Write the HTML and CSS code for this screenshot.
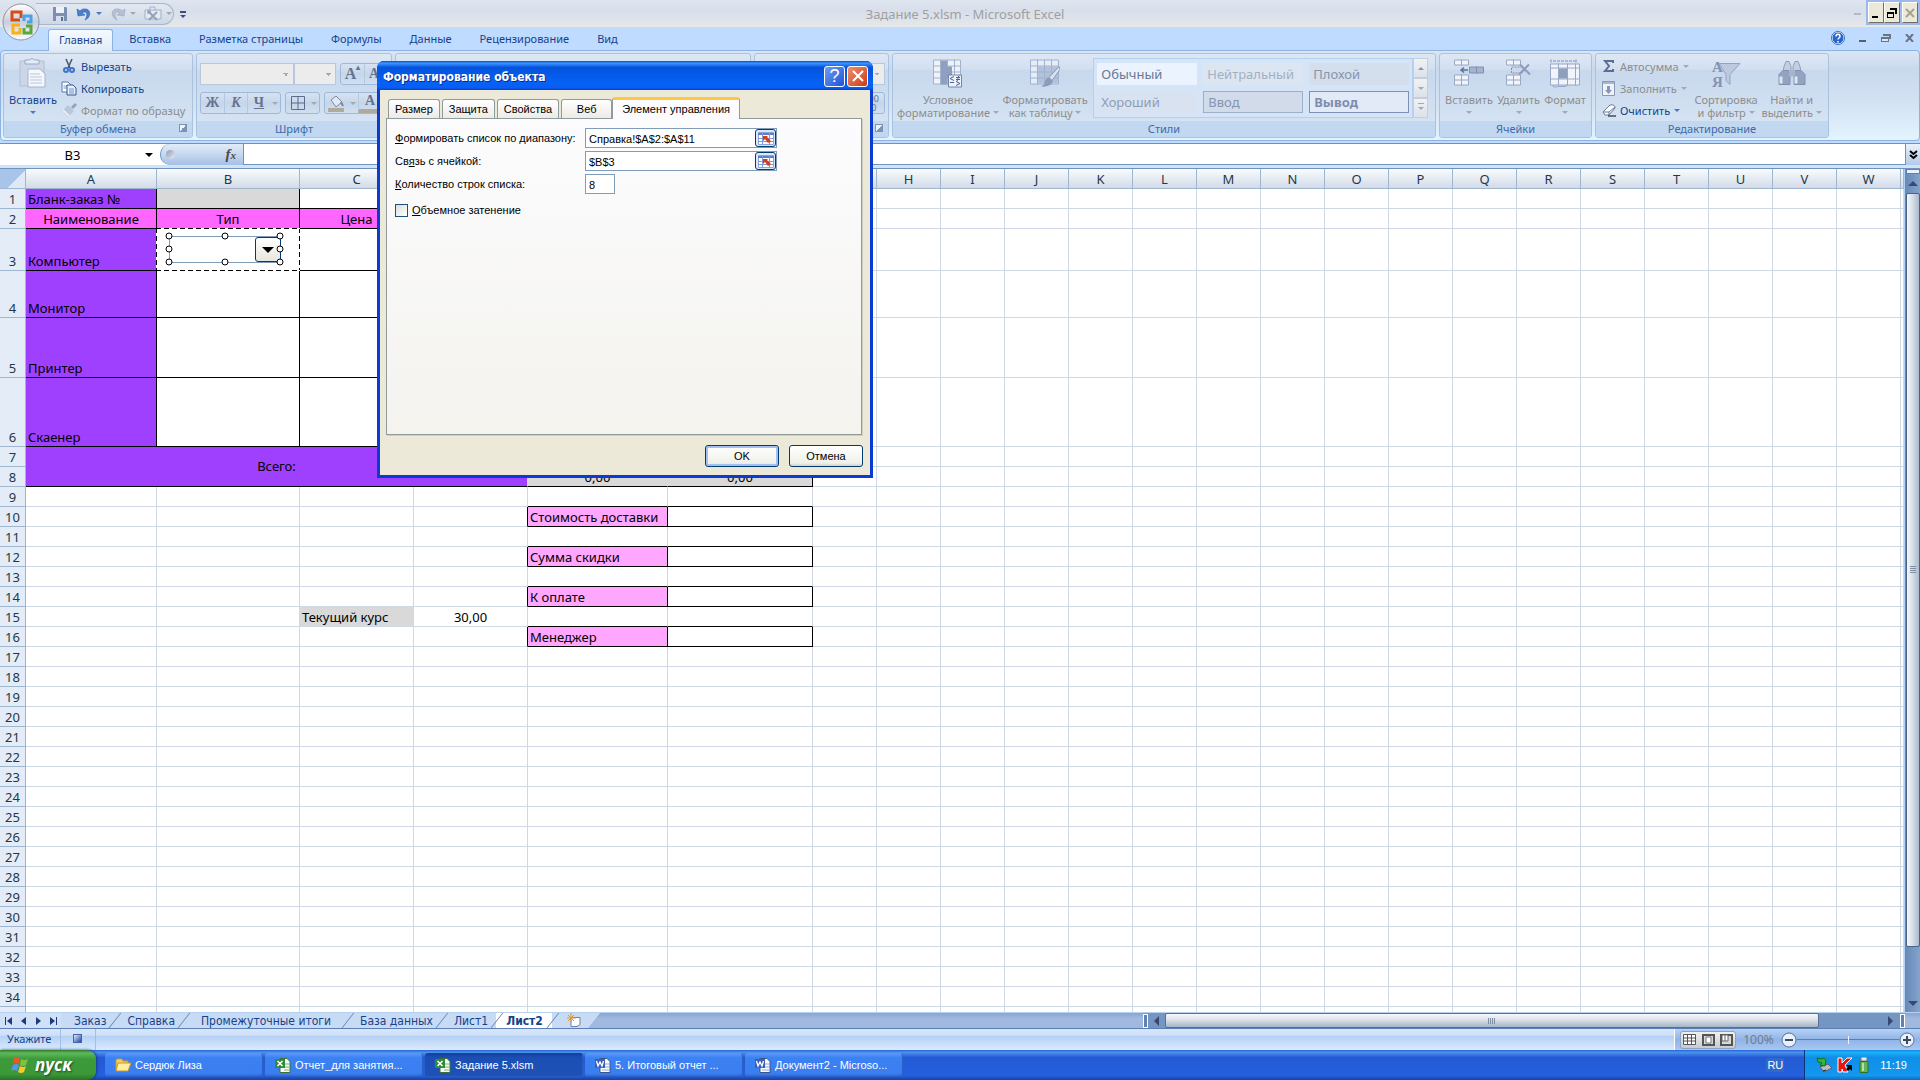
FILE: index.html
```
<!DOCTYPE html>
<html lang="ru">
<head>
    <meta charset="UTF-8">
    <meta name="viewport" content="width=device-width, initial-scale=1.0">
    <title>Задание 5.xlsm - Microsoft Excel</title>
    <link rel="stylesheet" href="styles.css">
</head>
<body>
    <header class="titlebar">
        <div class="qat">
            <button aria-label="Сохранить"><svg width="16" height="16" viewBox="0 0 16 16"><path d="M1 1h13l1 1v13H1z" fill="#7d8fb5"/><path d="M4 1h8v6H4z" fill="#eef2f8"/><path d="M4 10h8v5H4z" fill="#d5dcea"/><path d="M9 11h2v4H9z" fill="#5c6f98"/></svg></button>
            <button aria-label="Отменить"><svg width="16" height="16" viewBox="0 0 16 16"><path d="M1 3l1 7 7-1-3-2c4-3 7 1 3 7 7-3 6-12-1-11-2 0-3 1-4 2z" fill="#4a7fd0" stroke="#2f5fae" stroke-width=".6"/></svg><i class="arrow blue"></i></button>
            <button aria-label="Вернуть"><svg width="16" height="16" viewBox="0 0 16 16"><path d="M15 3l-1 7-7-1 3-2c-4-3-7 1-3 7-7-3-6-12 1-11 2 0 3 1 4 2z" fill="#b4c0d4" stroke="#98a6be" stroke-width=".6"/></svg><i class="arrow"></i></button>
            <button aria-label="Настройка"><svg width="18" height="16" viewBox="0 0 18 16"><path d="M1 4h16v9H1zM6 4V1h5v3" fill="#e4e9f2" stroke="#a3afc4"/><path d="M5 14l8-8M5 6l8 8" stroke="#94a2bb" stroke-width="2"/><circle cx="5" cy="6" r="2" fill="#94a2bb"/></svg><i class="arrow"></i></button>
        </div>
        <button class="qat-more" aria-label="Настройка панели"><i class="arrow dark"></i></button>
        <h1>Задание 5.xlsm - Microsoft Excel</h1>
        <span class="ghost-min"></span>
        <div class="win-buttons">
            <button aria-label="Свернуть"><svg width="12" height="12"><path d="M2 9h6v2H2z"/></svg></button>
            <button aria-label="Восстановить"><svg width="12" height="12"><path d="M4 1h7v6H9V3H4zM1 5h7v6H1zM2 7v3h5V7z" fill-rule="evenodd"/></svg></button>
            <button aria-label="Закрыть" class="off"><svg width="12" height="12"><path d="M2 2l8 8M10 2l-8 8" stroke="#a5a294" stroke-width="2"/></svg></button>
        </div>
    </header>

    <button class="office" aria-label="Кнопка Office">
        <svg width="38" height="38" viewBox="0 0 38 38">
            <defs><linearGradient id="ob" x1="0" y1="0" x2="0" y2="1"><stop offset="0" stop-color="#fff"/><stop offset=".5" stop-color="#c8cede"/><stop offset="1" stop-color="#fdfdfe"/></linearGradient></defs>
            <circle cx="19" cy="19" r="18" fill="url(#ob)" stroke="#8a95a8"/>
            <g fill="none" stroke-width="3">
                <path d="M18 17h-8V9h9v6" stroke="#dc4a13"/>
                <path d="M22 18v-5h7v6h-4" stroke="#4aa3e6"/>
                <path d="M18 22h-7v8h7v-5" stroke="#f5b21a"/>
                <path d="M22 25v5h7v-7h-5" stroke="#5aa83a"/>
            </g>
        </svg>
    </button>

    <nav class="tabs">
        <button class="active">Главная</button>
        <button>Вставка</button>
        <button>Разметка страницы</button>
        <button>Формулы</button>
        <button>Данные</button>
        <button>Рецензирование</button>
        <button>Вид</button>
        <div class="mdi">
            <svg width="14" height="14"><circle cx="7" cy="7" r="6" fill="#2765cf" stroke="#fff"/><circle cx="7" cy="7" r="6.5" fill="none" stroke="#3d6fb8"/><path d="M5 5.500c0-3 4-3 4 0 0 1.500-2 1.500-2 3M7 10v1.500" stroke="#fff" stroke-width="1.500" fill="none"/></svg>
            <svg width="8" height="8"><path d="M0 6h7v2H0z" fill="#555f70"/></svg>
            <svg width="10" height="8"><path d="M2 0h8v5H8V2H2zM0 3h8v5H0z" fill="#6b7485"/><path d="M1 5h6v2H1z" fill="#d8e6fa"/></svg>
            <svg width="9" height="8"><path d="M1 0l7 8M8 0L1 8" stroke="#6b7485" stroke-width="2"/></svg>
        </div>
    </nav>

    <section class="ribbon">
        <div class="group clip">
            <div class="body">
                <button class="big live"><svg width="28" height="31" viewBox="0 0 28 31"><path d="M1 3h24v25H1z" fill="#ccd6e7" stroke="#b2bfd6"/><path d="M6 2h4q3-3 6 0h4v4H6z" fill="#e6ebf4" stroke="#9caac4"/><path d="M9 11h12l5 5v13H9z" fill="#f4f7fc" stroke="#a5b4cf"/><path d="M11 16h10M11 19h12M11 22h12M11 25h12" stroke="#b9c6dd"/></svg><span>Вставить</span><i class="arrow blue"></i></button>
                <div class="stack">
                    <button class="small live"><svg width="16" height="16" viewBox="0 0 16 16"><path d="M5 1l4 9M11 1L7 10" stroke="#47566f" stroke-width="1.500"/><circle cx="5" cy="12" r="2" fill="none" stroke="#3f74c8" stroke-width="2"/><circle cx="11" cy="12" r="2" fill="none" stroke="#3f74c8" stroke-width="2"/></svg>Вырезать</button>
                    <button class="small live"><svg width="16" height="16" viewBox="0 0 16 16"><path d="M1 2h6l3 3v7H1z" fill="#fff" stroke="#5778ad"/><path d="M2.500 6h5M2.500 8h5" stroke="#7798cc"/><path d="M6 5h6l3 3v7H6z" fill="#e8f0fc" stroke="#35578f"/><path d="M8 9h5M8 11h5M8 13h5" stroke="#6f94cf"/></svg>Копировать</button>
                    <button class="small"><svg width="16" height="16" viewBox="0 0 16 16"><path d="M10 5l4-4 2 2-4 4z" fill="#93a2ba"/><path d="M7 3l6 6-4 4-2 2-6-6z" fill="#bac6d9"/><path d="M2 8l6 6" stroke="#e8edf5" stroke-width="2"/></svg>Формат по образцу</button>
                </div>
            </div>
            <footer>Буфер обмена<i class="launcher"></i></footer>
        </div>
        <div class="group font">
            <div class="body lines">
                <div class="line">
                    <select class="fname" aria-label="Шрифт" disabled></select>
                    <select class="fsize" aria-label="Размер шрифта" disabled></select>
                    <div class="btns"><button class="serif grow">A<sup>▴</sup></button><button class="serif">A<sup>▾</sup></button></div>
                </div>
                <div class="line">
                    <div class="btns"><button class="serif">Ж</button><button class="serif it">К</button><button class="serif un">Ч</button><button class="drop" aria-label="Подчеркивание"><i class="arrow"></i></button></div>
                    <div class="btns"><button aria-label="Границы"><svg width="14" height="14"><path d="M.5.5h13v13H.5zM7 0v14M0 7h14" fill="none" stroke="#5b6b8d"/></svg></button><button class="drop" aria-label="Вид границ"><i class="arrow"></i></button></div>
                    <div class="btns"><button aria-label="Заливка"><svg width="17" height="17"><path d="M3 5l5-4 6 6-6 5z" fill="#e3e9f3" stroke="#7987a3"/><path d="M13 7l2 4" stroke="#7987a3" stroke-width="2"/><path d="M0 13h16v4H0z" fill="#b0aa9c"/></svg></button><button class="drop" aria-label="Цвет заливки"><i class="arrow"></i></button><button class="serif color">A</button></div>
                </div>
            </div>
            <footer>Шрифт</footer>
        </div>
        <div class="group align"><div class="body"></div><footer></footer></div>
        <div class="group number">
            <div class="body lines">
                <div class="line"><select aria-label="Числовой формат" disabled></select></div>
                <div class="line end"><div class="btns"><button class="dec">,00<br>,0</button></div></div>
            </div>
            <footer><i class="launcher"></i></footer>
        </div>
        <div class="group styles">
            <div class="body">
                <button class="big wide"><svg width="30" height="30" viewBox="0 0 30 30"><path d="M.5 1.500h27v24H.5z" fill="#eef3fb" stroke="#a2b1cc"/><path d="M0 7.500h28M0 13.500h28M0 19.500h28M7.500 1v25M14.500 1v25M21.500 1v25" stroke="#a2b1cc"/><path d="M8 2h6v24H8zM14 8h5v12h-5z" fill="#8f9fc0"/><path d="M15.500 16.500h13v12h-13z" fill="#eef3fb" stroke="#7284a8"/><path d="M21 18l-4 2 4 2M17 24h4M23 19h4M23 21h4M26 17l-2 6M23 23l4 2-4 2" fill="none" stroke="#50628a"/></svg><span>Условное<br>форматирование <i class="arrow"></i></span></button>
                <button class="big wide"><svg width="30" height="30" viewBox="0 0 30 30"><path d="M.5 1.500h28v24H.5z" fill="#e6edf8" stroke="#a2b1cc"/><path d="M8 8h20v17H8z" fill="#b3c2dc"/><path d="M0 7.500h28M0 13.500h28M0 19.500h28M7.500 1v25M14.500 1v25M21.500 1v25" stroke="#a2b1cc"/><path d="M29 8L19 19l3 3 8-11z" fill="#dbe3f0" stroke="#8797b5"/><path d="M19 19l4 4q-3 6-12 5 4-2 4-5 1-4 4-4z" fill="#8b9cbb"/></svg><span>Форматировать<br>как таблицу <i class="arrow"></i></span></button>
                <div class="gallery">
                    <button class="s1">Обычный</button><button class="s2">Нейтральный</button><button class="s3">Плохой</button>
                    <button class="s4">Хороший</button><button class="s5">Ввод</button><button class="s6">Вывод</button>
                </div>
                <div class="gscroll"><button aria-label="Вверх"><i class="arrow up"></i></button><button aria-label="Вниз"><i class="arrow"></i></button><button aria-label="Все стили"><i class="arrow bar"></i></button></div>
            </div>
            <footer>Стили</footer>
        </div>
        <div class="group cells">
            <div class="body">
                <button class="big"><svg width="30" height="30" viewBox="0 0 30 30"><path d="M.5 1.500h14v5H.5zM.5 16.500h14v10H.5zM7.500 1v6M7.500 16v11M0 21.500h15" fill="#f1f5fb" stroke="#98a8c5"/><path d="M15.500 8.500h14v6h-14zM22.500 8v7" fill="#a4b3ce" stroke="#7e8fb0"/><path d="M14 11.500H7M10 9l-3 2.500 3 2.500" fill="none" stroke="#5f7299" stroke-width="1.500"/></svg><span>Вставить</span><i class="arrow"></i></button>
                <button class="big"><svg width="26" height="30" viewBox="0 0 26 30"><path d="M.5 1.500h14v5H.5zM.5 16.500h14v10H.5zM7.500 1v6M7.500 16v11M0 21.500h15" fill="#f1f5fb" stroke="#98a8c5"/><path d="M5.500 8.500h10l4 3-4 3h-10z" fill="#cdd8ea" stroke="#7e8fb0" stroke-dasharray="2 1"/><path d="M14 6l10 10M23 6L13 16" stroke="#8c9cba" stroke-width="2"/></svg><span>Удалить</span><i class="arrow"></i></button>
                <button class="big"><svg width="30" height="30" viewBox="0 0 30 30"><path d="M1 1v3M26 1v3M3 2.500h22" stroke="#7f90b0" stroke-dasharray="3 1"/><path d="M.5 5.500h29v21H.5z" fill="#f1f5fb" stroke="#98a8c5"/><path d="M0 9.500h30M0 20.500h30M8.500 5v22M17.500 5v22M25.500 5v22" stroke="#98a8c5"/><path d="M9 10h8v10H9z" fill="#8fa0bf"/><path d="M2 27q3 3 6 1h8l1-2" fill="none" stroke="#98a8c5"/></svg><span>Формат</span><i class="arrow"></i></button>
            </div>
            <footer>Ячейки</footer>
        </div>
        <div class="group edit">
            <div class="body">
                <div class="stack">
                    <button class="small"><svg width="14" height="16" viewBox="0 0 14 16"><path d="M11 5V3H3l4 5-4 5h8v-2" fill="none" stroke="#5c6d8f" stroke-width="2"/></svg>Автосумма <i class="arrow"></i></button>
                    <button class="small"><svg width="14" height="16" viewBox="0 0 14 16"><path d="M.5 1.500h12v14H.5z" fill="#eef2f9" stroke="#8998b5"/><path d="M1 2h11v2H1z" fill="#a9b6cf"/><path d="M5 6h3v4h2l-3.500 4L3 10h2z" fill="#8796b6"/></svg>Заполнить <i class="arrow"></i></button>
                    <button class="small live"><svg width="14" height="16" viewBox="0 0 14 16"><path d="M1 10l7-7q5-1 5 3l-6 7H3z" fill="#fff" stroke="#6a7a96"/><path d="M1 10l6 0 6-5M7 10v3" fill="none" stroke="#6a7a96"/><path d="M6 14h8" stroke="#000"/></svg>Очистить <i class="arrow blue"></i></button>
                </div>
                <button class="big sort"><svg width="30" height="30" viewBox="0 0 30 30"><text x="1" y="13" class="glyph">А</text><text x="1" y="28" class="glyph">Я</text><path d="M8 5h21L19 16v10l-4-4v-6z" fill="#bcc9de" stroke="#93a3c0"/></svg><span>Сортировка<br>и фильтр <i class="arrow"></i></span></button>
                <button class="big"><svg width="30" height="30" viewBox="0 0 30 30"><path d="M7 8l2-5h3l2 5v6H6zM16 8l2-5h3l2 5 1 6h-8z" fill="#c3cee1" stroke="#8e9ebc"/><path d="M2 16l4-4h6l1 5v9H2zM28 16l-4-4h-6l-1 5v9h11z" fill="#93a3c1" stroke="#8090b0"/><path d="M4 18v7M19 18v7" stroke="#dfe6f2" stroke-width="3"/><path d="M12 12h6v6h-6z" fill="#a5b3cd"/></svg><span>Найти и<br>выделить <i class="arrow"></i></span></button>
            </div>
            <footer>Редактирование</footer>
        </div>
    </section>

    <div class="formula-bar">
        <button class="name-box">B3</button><i class="arrow black"></i>
        <div class="fx"><i class="knob"></i><em>f<small>x</small></em></div>
        <input type="text" aria-label="Строка формул">
        <button class="expand" aria-label="Развернуть"><svg width="9" height="10"><path d="M1 1l3.500 3L8 1M1 5l3.500 3L8 5" fill="none" stroke="#000" stroke-width="2"/></svg></button>
    </div>

    <main class="sheet">
        <div class="grid-wrap"><table class="grid" id="grid"></table></div>
        <div class="vscroll"><i class="split"></i><i class="arrow up"></i><div class="thumb"></div><i class="arrow"></i></div>
    </main>

    <div class="sheet-bar">
        <div class="sheet-nav">
            <svg width="9" height="8"><path d="M1 0h1v8H1zM8 0v8L3 4z"/></svg>
            <svg width="9" height="8"><path d="M7 0v8L2 4z"/></svg>
            <svg width="9" height="8"><path d="M2 0v8l5-4z"/></svg>
            <svg width="9" height="8"><path d="M7 0h1v8H7zM1 0v8l5-4z"/></svg>
        </div>
        <div class="sheet-tabs">
            <button>Заказ</button><button>Справка</button><button class="roomy">Промежуточные итоги</button><button>База данных</button><button>Лист1</button><button class="active">Лист2</button>
            <button class="new" aria-label="Новый лист"><svg width="16" height="15"><path d="M5 4.500h9v7l-3 2H5z" fill="#fff" stroke="#6a7fae"/><path d="M5 0v9M1 5h9M2 2l6 6M8 2L2 8" stroke="#e59a2c"/></svg></button>
        </div>
        <div class="hscroll"><i class="split"></i><i class="tri left"></i><div class="track"><div class="thumb"></div></div><i class="tri"></i><i class="split"></i></div>
    </div>

    <div class="status">
        <span class="mode">Укажите</span>
        <span class="macro"><i></i></span>
        <div class="views">
            <div class="view-set">
                <button aria-label="Обычный"><svg width="14" height="12"><path d="M.5.500h12v10H.5zM4.500 0v11M8.500 0v11M0 4h13M0 7h13" fill="#fff" stroke="#555"/></svg></button>
                <button aria-label="Разметка"><svg width="13" height="12"><path d="M1 1h11v10H1z" fill="#d8d8d8" stroke="#555" stroke-width="2"/><path d="M4 3h5v6H4z" fill="#fff" stroke="#777"/></svg></button>
                <button aria-label="Страничный"><svg width="13" height="12"><path d="M1 1h11v10H1z" fill="#d8d8d8" stroke="#555" stroke-width="2"/><path d="M2 1h6v6H2zM5 0v7" fill="#fff" stroke="#666"/></svg></button>
            </div>
            <span class="pct">100%</span>
            <button class="zoom" aria-label="Уменьшить"><svg width="16" height="16"><circle cx="8" cy="8" r="7" fill="#e8f0fb" stroke="#54709a"/><path d="M4 7h8v2H4z" fill="#3d4a60"/></svg></button>
            <span class="slider"></span>
            <button class="zoom" aria-label="Увеличить"><svg width="16" height="16"><circle cx="8" cy="8" r="7" fill="#e8f0fb" stroke="#54709a"/><path d="M4 7h8v2H4zM7 4h2v8H7z" fill="#3d4a60"/></svg></button>
        </div>
    </div>

    <footer class="taskbar">
        <button class="start"><svg width="20" height="20" viewBox="0 0 20 20"><path d="M3 3q3-2 6 0L8 9Q5 7 2 9z" fill="#e8582a"/><path d="M10 4q3 2 7 0l-2 6q-3 2-6 0z" fill="#7fc241"/><path d="M2 10q3-2 6 0l-2 6q-3-2-6 0z" fill="#5b93ee"/><path d="M9 11q3 2 6 0l-2 6q-3 2-6 0z" fill="#fbc82c"/></svg>пуск</button>
        <button class="task"><svg width="16" height="16"><path d="M1 3l1-1h5l1 2h5v9H1z" fill="#f5cf56" stroke="#c9962a"/><path d="M3 6h13l-3 8H1z" fill="#fdeea0" stroke="#c9962a"/></svg><span>Сердюк Лиза</span></button>
        <button class="task"><svg width="16" height="16"><use href="#xl"/></svg><span>Отчет_для занятия...</span></button>
        <button class="task current"><svg width="16" height="16"><use href="#xl"/></svg><span>Задание 5.xlsm</span></button>
        <button class="task"><svg width="16" height="16"><use href="#wd"/></svg><span>5. Итоговый отчет ...</span></button>
        <button class="task"><svg width="16" height="16"><use href="#wd"/></svg><span>Документ2 - Microso...</span></button>
        <span class="lang">RU</span>
        <div class="tray">
            <svg width="16" height="16"><path d="M4 10l8-3 4 4-8 4z" fill="#b9bec6" stroke="#565c66"/><path d="M7 14l3-1" stroke="#222"/><path d="M1 1l4 1 3-1 2 2-1 6-5-1 2-2-4-1z" fill="#35b53c" stroke="#12701b"/></svg>
            <svg width="16" height="16"><path d="M1 1h4v5l5-5h5L8 8l3 7H6L5 12v3H1z" fill="#e8160c" stroke="#fff"/><path d="M9 8l2 2-2 2 2 2 2-2 2 2V8z" fill="#000"/></svg>
            <svg width="12" height="16"><path d="M3 0h6v4H3z" fill="#e9ecef" stroke="#777"/><path d="M2 4.500h8v11H2z" fill="#69b357" stroke="#2c7424"/><path d="M4 6h2v8H4z" fill="#b5e2a4"/></svg>
            <span>11:19</span>
        </div>
    </footer>

    <svg class="defs" width="0" height="0">
        <symbol id="xl" viewBox="0 0 16 16"><path d="M5 1.500h7l3 3v11H5z" fill="#f4fbf2" stroke="#3f6e3c"/><path d="M9 7h5M9 10h5M9 13h5" stroke="#7bb072"/><path d="M0 2h10v9H0z" fill="#2f8a3a"/><path d="M2.500 4l5 5M7.500 4l-5 5" stroke="#fff" stroke-width="1.500"/></symbol>
        <symbol id="wd" viewBox="0 0 16 16"><path d="M5 1.500h7l3 3v11H5z" fill="#f6f9ff" stroke="#3d5687"/><path d="M9 7h5M9 10h5M7 13h7" stroke="#8fa9d8"/><path d="M0 2h10v9H0z" fill="#3a5fb5"/><path d="M1.500 4l1.500 5 2-4 2 4 1.500-5" fill="none" stroke="#fff" stroke-width="1.300"/></symbol>
        <symbol id="ref" viewBox="0 0 16 13"><path d="M.5.500h15v12H.5z" fill="#fff" stroke="#8ba6d6"/><path d="M0 2h16" stroke="#5a80cc" stroke-width="2"/><path d="M0 6.500h16M0 9.500h16M4.500 1v12M11.500 1v12" stroke="#7f9bd3"/><path d="M5 4h5l-1 1 4 4-3 2-3-4-2 2z" fill="#d63a1c"/></symbol>
    </svg>

    <div class="dialog" role="dialog" aria-labelledby="dlg-title">
        <div class="dlg-head">
            <h2 id="dlg-title">Форматирование объекта</h2>
            <button class="help">?</button>
            <button class="close" aria-label="Закрыть"><svg width="12" height="12"><path d="M1 1l10 10M11 1L1 11" stroke="#fff" stroke-width="2"/></svg></button>
        </div>
        <div class="dlg-body">
            <div class="dlg-tabs">
                <button>Размер</button><button>Защита</button><button>Свойства</button><button>Веб</button><button class="active">Элемент управления</button>
            </div>
            <form class="panel">
                <label for="range"><u>Ф</u>ормировать список по диапазону:</label>
                <div class="ref"><input id="range" type="text" value="Справка!$A$2:$A$11"><button type="button" aria-label="Выбрать диапазон"><svg width="16" height="13"><use href="#ref"/></svg></button></div>
                <label for="link">Св<u>я</u>зь с ячейкой:</label>
                <div class="ref"><input id="link" type="text" value="$B$3"><button type="button" aria-label="Выбрать ячейку"><svg width="16" height="13"><use href="#ref"/></svg></button></div>
                <label for="rows"><u>К</u>оличество строк списка:</label>
                <div class="ref short"><input id="rows" type="text" value="8"></div>
                <label class="check"><input type="checkbox"><span><u>О</u>бъемное затенение</span></label>
            </form>
            <div class="dlg-foot">
                <button class="default">OK</button>
                <button>Отмена</button>
            </div>
        </div>
    </div>

    <script src="script.js"></script>
</body>
</html>
```
FILE: styles.css
```
* {
    box-sizing: border-box;
}
body {
    margin: 0;
    height: 100vh;
    display: flex;
    flex-direction: column;
    overflow: hidden;
    font: 11px/13px "Noto Sans", "Open Sans", sans-serif;
    color: #15428b;
    background: #bfdbff;
}
button, input, select {
    font: inherit;
    color: inherit;
    margin: 0;
    padding: 0;
    border: none;
    background: none;
    border-radius: 0;
}
svg {
    display: block;
    flex: none;
}
.arrow {
    display: inline-block;
    flex: none;
    border: 3px solid transparent;
    border-top: 3px solid #a3a9b3;
    border-bottom: none;
}
.arrow.up {
    border-top: none;
    border-bottom: 3px solid #8a93a3;
}
.arrow.blue {
    border-top-color: #4d79b8;
}
.arrow.black {
    border-width: 4px;
    border-top-color: #000;
    border-bottom: none;
}
.arrow.dark, .arrow.bar {
    position: relative;
    border-top-color: #3a4d80;
}
.arrow.bar {
    border-top-color: #a3a9b3;
}
.arrow.dark::before, .arrow.bar::before {
    content: "";
    position: absolute;
    left: -3px;
    top: -7px;
    width: 6px;
    height: 2px;
    background: #3a4d80;
}
.arrow.bar::before {
    height: 1px;
    background: #a3a9b3;
}

/* title bar */
.titlebar {
    flex: none;
    height: 27px;
    display: flex;
    align-items: center;
    background: linear-gradient(#e0e6ef, #d8deea 40%, #dfe4ea 75%, #e6e9e8);
}
.qat {
    display: flex;
    align-items: center;
    gap: 8px;
    height: 22px;
    width: 138px;
    margin-left: 36px;
    padding-left: 16px;
    border: 1px solid #a9b7cb;
    border-left: none;
    border-radius: 0 11px 11px 0;
    background: linear-gradient(#e3e9f2, #ced8e6);
}
.qat button {
    display: flex;
    align-items: center;
    gap: 4px;
}
.qat-more {
    margin-left: 6px;
}
.titlebar h1 {
    flex: 1;
    margin: 0 0 0 -110px;
    text-align: center;
    font-size: 13px;
    line-height: 18px;
    font-weight: normal;
    color: #a0a0a0;
}
.ghost-min {
    width: 7px;
    height: 2px;
    margin-right: 5px;
    background: #b5b8bc;
}
.win-buttons {
    display: flex;
    align-self: flex-start;
    height: 25px;
    padding: 2px;
    background: #9fb8ea;
}
.win-buttons button {
    width: 16px;
    height: 21px;
    padding: 2px 1px;
    background: #ece9d8;
    border: 1px solid;
    border-color: #fff #716f64 #716f64 #fff;
}
.win-buttons .off {
    margin-left: 2px;
}
.office {
    position: absolute;
    left: 2px;
    top: 3px;
}

/* ribbon tabs */
.tabs {
    flex: none;
    display: flex;
    height: 23px;
    padding: 2px 6px 0 48px;
    background: #bfdbff;
}
.tabs > button {
    height: 22px;
    padding: 0 14px 3px;
    white-space: nowrap;
}
.tabs > .active {
    padding: 0 10px 3px;
    margin-right: 2px;
    border: 1px solid #8db2e3;
    border-bottom: none;
    border-radius: 3px 3px 0 0;
    background: linear-gradient(#f6faff, #e0ebf8);
    z-index: 1;
}
.mdi {
    display: flex;
    align-items: center;
    gap: 14px;
    height: 18px;
    margin-left: auto;
}

/* ribbon */
.ribbon {
    flex: none;
    display: flex;
    gap: 3px;
    height: 91px;
    padding: 2px 2px;
    border: 1px solid #8db2e3;
    border-radius: 4px;
    background: linear-gradient(#dbe6f4, #c9d9ed 20%, #d3e3f3 60%, #e3f4ff);
}
.group {
    flex: none;
    display: flex;
    flex-direction: column;
    border: 1px solid #a9c2de;
    border-radius: 3px;
    overflow: hidden;
    background: linear-gradient(#dde8f5, #d3dff0 18%, #c8d8ed 20%, #d8e6f4);
}
.group .body {
    flex: 1;
    display: flex;
    justify-content: space-between;
    padding: 4px 6px 0;
}
.group footer {
    display: flex;
    align-items: center;
    justify-content: center;
    position: relative;
    height: 16px;
    padding-bottom: 2px;
    background: #c1d8f0;
    color: #3e6aaa;
}
.launcher {
    position: absolute;
    right: 5px;
    top: 3px;
    width: 8px;
    height: 8px;
    border: 1px solid #7b93b5;
    background: linear-gradient(135deg, #eef4fb 50%, #7b93b5 50%);
}
.clip { width: 190px; }
.font { width: 196px; }
.align { width: 356px; }
.number { width: 135px; }
.styles { width: 544px; }
.cells { width: 153px; }
.edit { width: 234px; }

.big {
    display: flex;
    flex-direction: column;
    align-items: center;
    gap: 4px;
    color: #8d8d8d;
    white-space: nowrap;
}
.big svg {
    height: 31px;
}
.big .arrow {
    margin-top: 1px;
}
.big span .arrow {
    margin: 0 0 3px;
}
.live {
    color: #15428b;
}
.stack {
    display: flex;
    flex-direction: column;
}
.small {
    display: flex;
    align-items: center;
    gap: 4px;
    height: 22px;
    color: #8d8d8d;
    white-space: nowrap;
}
.small.live {
    color: #15428b;
}
.group .lines {
    flex-direction: column;
    justify-content: flex-start;
    gap: 7px;
    padding: 9px 3px 0;
}
.line {
    display: flex;
    gap: 4px;
}
.line.end {
    justify-content: flex-end;
}
.line select {
    appearance: none;
    width: 100%;
    height: 22px;
    border: 1px solid #b5c8df;
    opacity: 1;
    background: conic-gradient(from -45deg at 50% 100%, #a3a9b3 90deg, transparent 0) right 4px center / 6px 3px no-repeat, #ececec;
}
.line .fname {
    width: 97px;
    margin-right: -4px;
}
.line .fsize {
    width: 43px;
}
.btns {
    display: flex;
    flex: none;
    height: 22px;
    border: 1px solid #9fb9da;
    border-radius: 3px;
    background: linear-gradient(#d6e2f2, #c6d6ea 50%, #d0dff0);
}
.btns button {
    display: flex;
    align-items: center;
    justify-content: center;
    width: 23px;
    border-left: 1px solid #b5c8df;
    color: #66738f;
}
.btns button:first-child {
    border-left: none;
}
.btns .drop {
    width: 10px;
    border-left: none;
}
.btns .serif {
    font: bold 14px/18px "Liberation Serif", serif;
}
.btns .grow {
    font-size: 16px;
}
.btns sup {
    font-size: 8px;
    line-height: 8px;
    align-self: flex-start;
}
.btns .it {
    font-style: italic;
}
.btns .un {
    text-decoration: underline;
}
.btns .color {
    border-bottom: 4px solid #b0aa9c;
}
.btns .dec {
    font-size: 9px;
    line-height: 9px;
}
.wide {
    width: 98px;
}
.styles .body {
    padding: 4px 7px 0 6px;
    justify-content: flex-start;
}
.gallery {
    display: grid;
    grid-template-columns: repeat(3, 100px);
    grid-auto-rows: 22px;
    gap: 6px;
    height: 60px;
    flex: 1;
    padding: 4px 3px;
    border: 1px solid #b5cfee;
    background: #d5e5f7;
}
.gallery button {
    padding: 0 4px;
    text-align: left;
    font-size: 13px;
}
.gallery .s1 { background: #ebf3ff; color: #6a7894; }
.gallery .s2 { background: #dce6f2; color: #a3afc4; }
.gallery .s3 { background: #d3dfec; color: #8594b0; }
.gallery .s4 { background: #d8e2f1; color: #8e9cb6; }
.gallery .s5 { background: #d1dbea; color: #8594b0; border: 1px solid #9fafca; }
.gallery .s6 { background: #e2eaf8; color: #7f8dad; border: 1px solid #7d90b5; font-weight: bold; }
.gscroll {
    display: flex;
    flex-direction: column;
    width: 15px;
    height: 60px;
}
.gscroll button {
    flex: 1;
    display: flex;
    align-items: center;
    justify-content: center;
    border: 1px solid #c3cfde;
    background: linear-gradient(#f0f2f5, #dde2e9);
}
.cells .body {
    padding: 4px 5px 0;
}
.clip .body, .edit .body {
    padding-top: 1px;
}
.clip .body {
    padding-left: 5px;
}
.clip .stack {
    width: 125px;
}
.clip .big, .edit .big {
    padding-top: 3px;
}
.edit .body {
    padding-right: 6px;
}
.edit .sort {
    margin-left: 2px;
}
.glyph {
    font: bold 15px "Liberation Serif", serif;
    fill: #8292b1;
}

/* formula bar */
.formula-bar {
    flex: none;
    display: flex;
    align-items: center;
    height: 25px;
    margin-top: 2px;
    border-top: 1px solid #6f93bd;
    border-bottom: 3px solid #d3e3f6;
    background: #fff;
    color: #000;
}
.name-box {
    width: 145px;
    font-size: 13px;
    line-height: 18px;
}
.fx {
    display: flex;
    align-items: center;
    justify-content: space-between;
    width: 84px;
    height: 21px;
    margin-left: 7px;
    padding: 0 7px 0 5px;
    border-left: 1px solid #6f93bd;
    border-right: 1px solid #6f93bd;
    border-radius: 10px 0 0 10px;
    background: linear-gradient(#e2ecf9, #c6d7f0 50%, #a5bfe6);
}
.knob {
    width: 9px;
    height: 9px;
    border-radius: 50%;
    background: linear-gradient(135deg, #8c9ab5, #e9eef6);
}
.fx em {
    font: italic bold 15px/16px "Liberation Serif", serif;
    color: #4a4a4a;
}
.fx small {
    font-size: 11px;
}
.formula-bar input {
    flex: 1;
    height: 21px;
    min-width: 0;
    border-bottom: 1px solid #6f93bd;
    background: #fff;
}
.expand {
    width: 15px;
    height: 21px;
    padding-left: 3px;
    background: linear-gradient(#eaf2fc, #b3c9ea);
    border-left: 1px solid #6f93bd;
}

/* worksheet */
.sheet {
    flex: 1;
    min-height: 0;
    display: flex;
    border-top: 1px solid #6f93bd;
    background: #fff;
}
.grid-wrap {
    flex: 1;
    min-width: 0;
    overflow: hidden;
}
.grid {
    width: 100%;
    table-layout: fixed;
    border-spacing: 0;
    font-size: 13px;
    line-height: 17px;
    color: #000;
}
.grid th, .grid td {
    height: 20px;
    padding: 0 2px;
    border-right: 1px solid #d0d7e5;
    border-bottom: 1px solid #d0d7e5;
    vertical-align: bottom;
    white-space: nowrap;
    overflow: hidden;
}
.grid th {
    border-color: #9eb6ce;
    font-weight: normal;
    color: #22384a;
    background: #e4ecf7;
}
.grid thead th {
    background: linear-gradient(#f9fcfd, #d3dbe9);
}
.grid thead .corner {
    background: linear-gradient(135deg, transparent 60%, #dfe8f5 60%), #a9c4e9;
}
.grid td.b { border-color: #000; }
.grid td.bb { border-bottom-color: #000; }
.grid td.br { border-right-color: #000; }
.grid td.purple { background: #a040ff; }
.grid td.pink { background: #ff66ff; }
.grid td.rose { background: #ffa6ff; }
.grid td.gray { background: #d9d9d9; }
.grid td.nogrid { border-right-color: #d9d9d9; }
.grid td.c { text-align: center; }
.grid td.mid { vertical-align: middle; }
.grid td.host {
    position: relative;
    overflow: visible;
}
.ants {
    position: absolute;
    inset: -1px;
    background:
        repeating-linear-gradient(90deg, #000 0 5px, #fff 5px 8px) top / 100% 1px no-repeat,
        repeating-linear-gradient(90deg, #000 0 5px, #fff 5px 8px) bottom / 100% 1px no-repeat,
        repeating-linear-gradient(#000 0 5px, #fff 5px 8px) left / 1px 100% no-repeat,
        repeating-linear-gradient(#000 0 5px, #fff 5px 8px) right / 1px 100% no-repeat,
        #fff;
}
.combo {
    position: absolute;
    left: 12px;
    top: 7px;
    width: 112px;
    height: 27px;
}
.combo select {
    appearance: none;
    width: 100%;
    height: 100%;
    border: 1px solid #7f9db9;
    background: #fff;
}
.combo .drop {
    position: absolute;
    right: 0;
    top: 1px;
    width: 26px;
    height: 25px;
    display: flex;
    align-items: center;
    justify-content: center;
    border: 1px solid #003c74;
    border-radius: 3px;
    background: linear-gradient(#fff, #e8e6dc);
    pointer-events: none;
}
.combo .drop .arrow {
    border-width: 6px;
    border-bottom: none;
}
.combo svg {
    position: absolute;
    inset: -4px;
}

.vscroll {
    flex: none;
    display: flex;
    flex-direction: column;
    align-items: center;
    gap: 7px;
    width: 16px;
    padding-bottom: 6px;
    border-left: 1px solid #b6d0ef;
    background: linear-gradient(90deg, #6689b8, #84a3cc);
}
.vscroll .split {
    width: 14px;
    height: 5px;
    border: 1px solid #5d82b3;
    background: #e9f2fc;
}
.vscroll .arrow {
    border-width: 5px;
    border-top-color: #3a4770;
    border-bottom: none;
}
.vscroll .arrow.up {
    border-top: none;
    border-bottom: 5px solid #3a4770;
}
.vscroll .thumb {
    flex: 1;
    width: 14px;
    margin-bottom: 47px;
    border: 1px solid #4a628c;
    border-radius: 2px;
    background: repeating-linear-gradient(#7f8da3 0 1px, transparent 1px 2px) center / 6px 8px no-repeat, linear-gradient(90deg, #f4f7fa, #dbe2ea 40%, #a9b9cd);
}

/* sheet tabs */
.sheet-bar {
    flex: none;
    display: flex;
    height: 17px;
    border-top: 1px solid #b6d0ef;
    border-bottom: 1px solid #5a7fb5;
    background: linear-gradient(#86a6d3, #a3badf 40%, #9fb8de);
    font: 12px/14px "DejaVu Sans Condensed", "DejaVu Sans", sans-serif;
}
.sheet-nav {
    display: flex;
    align-items: center;
    gap: 6px;
    width: 61px;
    padding-left: 4px;
    background: #cfe0f7;
    fill: #1d3a7d;
}
.sheet-tabs {
    display: flex;
    background: #cfe0f7;
    clip-path: polygon(0 0, 100% 0, calc(100% - 12px) 100%, 0 100%);
}
.sheet-tabs button {
    position: relative;
    padding: 0 8px 0 13px;
    background: #c8dbf5;
    white-space: nowrap;
}
.sheet-tabs button:not(:last-child)::after {
    content: "";
    position: absolute;
    right: -1px;
    top: 0;
    width: 1px;
    height: 16px;
    background: #6485b9;
    transform: skewX(-38deg);
    z-index: 1;
}
.sheet-tabs .roomy {
    padding: 0 16px 0 18px;
}
.sheet-tabs .active {
    padding: 0 9px 0 10px;
    background: #fff;
    font-weight: bold;
}
.sheet-tabs .new {
    padding: 0 18px 0 14px;
}
.hscroll {
    display: flex;
    align-items: center;
    width: 762px;
    margin-left: auto;
    margin-right: 15px;
    background: #7595c2;
}
.split {
    flex: none;
    width: 5px;
    height: 14px;
    border: 1px solid #fff;
    background: #5d82b3;
}
.tri {
    border: 5px solid transparent;
    border-left-color: #3a4770;
    border-right: none;
    margin: 0 7px 0 12px;
}
.tri.left {
    border-right: 5px solid #3a4770;
    border-left: none;
    margin: 0 6px;
}
.track {
    flex: 1;
    height: 15px;
}
.hscroll .thumb {
    width: 92%;
    height: 15px;
    border: 1px solid #5a6f94;
    border-radius: 2px;
    background: repeating-linear-gradient(90deg, #7f8da3 0 1px, transparent 1px 2px) center / 8px 6px no-repeat, linear-gradient(#f6f8fb, #dfe5ec 40%, #a5b4c8);
}

/* status bar */
.status {
    flex: none;
    display: flex;
    height: 21px;
    line-height: 19px;
    background: linear-gradient(#d6e6fb, #cfe0f8 30%, #b4d1f5 35%, #dceafc);
}
.mode {
    width: 61px;
    padding-left: 7px;
    border-right: 1px solid #a3bfe5;
}
.macro {
    width: 35px;
    padding: 5px 0 0 12px;
    border-right: 1px solid #a3bfe5;
}
.macro i {
    display: block;
    width: 9px;
    height: 9px;
    border: 1px solid #4464a5;
    background: linear-gradient(135deg, #dde9fa, #26479a);
}
.views {
    display: flex;
    align-items: center;
    margin-left: auto;
    padding: 0 5px;
    border-left: 1px solid #fff;
    background: linear-gradient(#b8d2f4, #8fb4e6 50%, #a9c8f2);
}
.view-set {
    display: flex;
    border: 1px solid #8aa2c6;
    border-radius: 3px;
    background: linear-gradient(#f0f0f0, #c8ccd2);
}
.view-set button {
    display: flex;
    align-items: center;
    justify-content: center;
    width: 18px;
    height: 16px;
}
.pct {
    width: 45px;
    text-align: center;
    font-size: 12px;
    color: #707c8f;
}
.slider {
    width: 102px;
    height: 8px;
    background: linear-gradient(#eef5ff, #eef5ff) center / 1px 8px no-repeat, linear-gradient(#5a7fb5, #5a7fb5) center / 100% 1px no-repeat;
}

/* taskbar */
.taskbar {
    flex: none;
    display: flex;
    align-items: center;
    height: 30px;
    background: linear-gradient(#2a63d8, #4a91ee 8%, #2459d3 25%, #2460df 85%, #1941a5);
    font: 11px/14px "Liberation Sans", sans-serif;
    color: #fff;
}
.start {
    display: flex;
    align-items: center;
    gap: 4px;
    width: 96px;
    height: 30px;
    margin-right: 9px;
    padding-left: 11px;
    border-radius: 0 9px 9px 0;
    background: linear-gradient(#2f7a2c, #5fb95a 10%, #3d9a3a 30%, #3b9938 80%, #2a722a);
    box-shadow: 1px 0 3px #123c8c;
    font: italic bold 17px/24px "Open Sans", sans-serif;
    text-shadow: 1px 1px 2px #1c4b1b;
}
.task {
    display: flex;
    align-items: center;
    gap: 4px;
    width: 158px;
    height: 24px;
    margin-right: 2px;
    padding-left: 10px;
    border-radius: 3px;
    background: linear-gradient(#5c9bf8, #3c81f3 20%, #3a7ef0 85%, #2c66cf);
    box-shadow: inset -1px -1px 1px #2a5fc4;
    white-space: nowrap;
}
.task.current {
    background: linear-gradient(#163f96, #1b4fb5 20%, #1e52b7);
}
.lang {
    margin-left: auto;
    margin-right: 20px;
    padding: 0 1px;
    background: #3069c8;
}
.tray {
    display: flex;
    align-items: center;
    gap: 5px;
    height: 30px;
    padding: 0 13px 0 11px;
    border-left: 1px solid #0b3577;
    background: linear-gradient(#1488e0, #1cb0f8 8%, #0f8fe8 25%, #1497ee 85%, #0d6cc0);
}
.tray span {
    margin-left: 5px;
}
.defs {
    position: absolute;
}

/* dialog window */
.dialog {
    position: absolute;
    left: 377px;
    top: 61px;
    width: 496px;
    height: 417px;
    display: flex;
    flex-direction: column;
    border-radius: 7px 7px 0 0;
    background: #0a3cd2;
    color: #000;
    font: 11px/14px "Liberation Sans", sans-serif;
}
.dlg-head {
    display: flex;
    align-items: center;
    gap: 2px;
    height: 29px;
    padding: 1px 5px 0 6px;
    border-radius: 7px 7px 0 0;
    background: linear-gradient(#0a4fd0, #3b93ff 8%, #0553dd 22%, #0562f5 75%, #0a5cf5 92%, #0344c8);
}
.dlg-head h2 {
    flex: 1;
    margin: 0;
    padding-top: 1px;
    font: bold 12px/16px "DejaVu Sans Condensed", "DejaVu Sans", sans-serif;
    color: #fff;
    text-shadow: 1px 1px 0 #0a2a8a;
}
.dlg-head button {
    display: flex;
    align-items: center;
    justify-content: center;
    width: 21px;
    height: 21px;
    border: 1px solid #fff;
    border-radius: 3px;
}
.dlg-head .help {
    background: linear-gradient(135deg, #6f9df5, #1d53d8);
    color: #fff;
    font-size: 18px;
}
.dlg-head .close {
    background: linear-gradient(135deg, #f0906f, #cc3c14);
}
.dlg-body {
    flex: 1;
    display: flex;
    flex-direction: column;
    margin: 0 3px 3px;
    padding: 7px 7px 8px 6px;
    background: #ece9d8;
}
.dlg-tabs {
    display: flex;
    align-items: flex-end;
    gap: 2px;
    height: 21px;
    padding-left: 2px;
}
.dlg-tabs button {
    height: 19px;
    min-width: 51px;
    padding: 0 6px;
    border: 1px solid #919b9c;
    border-bottom: none;
    border-radius: 3px 3px 0 0;
    background: linear-gradient(#fff, #ecebe6);
}
.dlg-tabs .active {
    height: 22px;
    margin: 0 0 -1px -2px;
    padding: 0 9px 1px;
    border-top: 3px solid #ffc73c;
    background: #fcfcfe;
    z-index: 1;
}
.panel {
    flex: 1;
    display: grid;
    grid-template-columns: 190px 192px;
    grid-auto-rows: 20px;
    gap: 3px 0;
    margin-right: 1px;
    padding: 9px 8px;
    border: 1px solid #919b9c;
    box-shadow: 1px 1px 0 #d0cebf;
    background: linear-gradient(#fcfcfe, #f4f3ee);
}
.panel label {
    line-height: 20px;
    white-space: nowrap;
}
.ref {
    display: flex;
    border: 1px solid #7f9db9;
    background: #fff;
}
.ref input {
    flex: 1;
    min-width: 0;
    padding: 2px 3px 0;
}
.ref button {
    display: flex;
    align-items: center;
    justify-content: center;
    width: 21px;
    border: 1px solid #003c74;
    border-radius: 3px;
    background: #dce8fa;
}
.ref.short {
    width: 30px;
}
.panel .check {
    grid-column: 1 / 3;
    display: flex;
    align-items: center;
    gap: 4px;
    margin-top: 6px;
}
.check input {
    appearance: none;
    width: 13px;
    height: 13px;
    border: 1px solid #1c5180;
    background: linear-gradient(135deg, #dcdcd7, #fff);
}
.dlg-foot {
    display: flex;
    justify-content: flex-end;
    gap: 10px;
    padding-top: 10px;
}
.dlg-foot button {
    width: 74px;
    height: 22px;
    border: 1px solid #003c74;
    border-radius: 3px;
    background: linear-gradient(#fff, #f0f0ea 85%, #d6d0c5);
}
.dlg-foot .default {
    box-shadow: inset 0 0 0 2px #a3c0f0;
}
```
FILE: script.js
```
const LAST_ROW = 35;
const LETTERS = 'ABCDEFGHIJKLMNOPQRSTUVWX'.split('');
const WIDTHS = { A: 131, B: 143, C: 114, D: 114, E: 140, F: 145 };
const HEIGHTS = { 3: 42, 4: 47, 5: 60, 6: 69 };

// address -> [class, text, colspan, rowspan]
const CELLS = {
    A1: ['purple b', 'Бланк-заказ №'],
    B1: ['gray b'],
    C1: ['bb'], D1: ['bb'], E1: ['bb'], F1: ['bb'],
    A2: ['pink b c', 'Наименование'],
    B2: ['pink b c', 'Тип'],
    C2: ['pink b c', 'Цена'],
    D2: ['pink b'], E2: ['pink b'], F2: ['pink b'],
    A3: ['purple b', 'Компьютер'],
    A4: ['purple b', 'Монитор'],
    A5: ['purple b', 'Принтер'],
    A6: ['purple b', 'Скаенер'],
    A7: ['purple bb c mid', 'Всего:', 4, 2],
    E7: ['gray nogrid'], F7: ['gray br'],
    E8: ['gray bb c nogrid', '0,00'], F8: ['gray b c', '0,00'],
    E9: ['bb'], F9: ['bb'],
    C15: ['gray', 'Текущий курс'],
    D15: ['c', '30,00']
};

for (let r = 3; r <= 6; r++) {
    for (const l of 'BCDEF') CELLS[l + r] = ['b'];
}
const totals = { 10: 'Стоимость доставки', 12: 'Сумма скидки', 14: 'К оплате', 16: 'Менеджер' };
for (const r in totals) {
    CELLS['D' + r] = ['br'];
    CELLS['E' + r] = ['rose b', totals[r]];
    CELLS['F' + r] = ['b'];
    CELLS['E' + (r - 1)] = ['bb'];
    CELLS['F' + (r - 1)] = ['bb'];
}

// combo box placed over B3, with its selection handles
const handles = [[4, 4], [60, 4], [115, 4], [4, 17], [115, 17], [4, 30], [60, 30], [115, 30]]
    .map(p => `<circle cx="${p[0]}" cy="${p[1]}" r="3" fill="#fff" stroke="#000"/>`).join('');
CELLS.B3 = ['b host', `<div class="ants"></div><div class="combo"><select aria-label="Тип"></select>
    <span class="drop"><i class="arrow black"></i></span><svg width="120" height="35">${handles}</svg></div>`];

let html = '<colgroup><col width="26">';
for (const l of LETTERS) {
    html += l === 'X' ? '<col>' : `<col width="${WIDTHS[l] || 64}">`;
}
html += '</colgroup><thead><tr><th class="corner"></th>';
for (const l of LETTERS) html += `<th>${l === 'X' ? '' : l}</th>`;
html += '</tr></thead><tbody>';

for (let r = 1; r <= LAST_ROW; r++) {
    html += `<tr style="height:${HEIGHTS[r] || 20}px"><th>${r < LAST_ROW ? r : ''}</th>`;
    for (const l of LETTERS) {
        if ((r === 7 || r === 8) && 'ABCD'.includes(l) && l + r !== 'A7') continue;
        const [cls = '', text = '', cs = 1, rs = 1] = CELLS[l + r] || [];
        html += `<td class="${cls}" colspan="${cs}" rowspan="${rs}">${text}</td>`;
    }
    html += '</tr>';
}
document.getElementById('grid').innerHTML = html + '</tbody>';
```
